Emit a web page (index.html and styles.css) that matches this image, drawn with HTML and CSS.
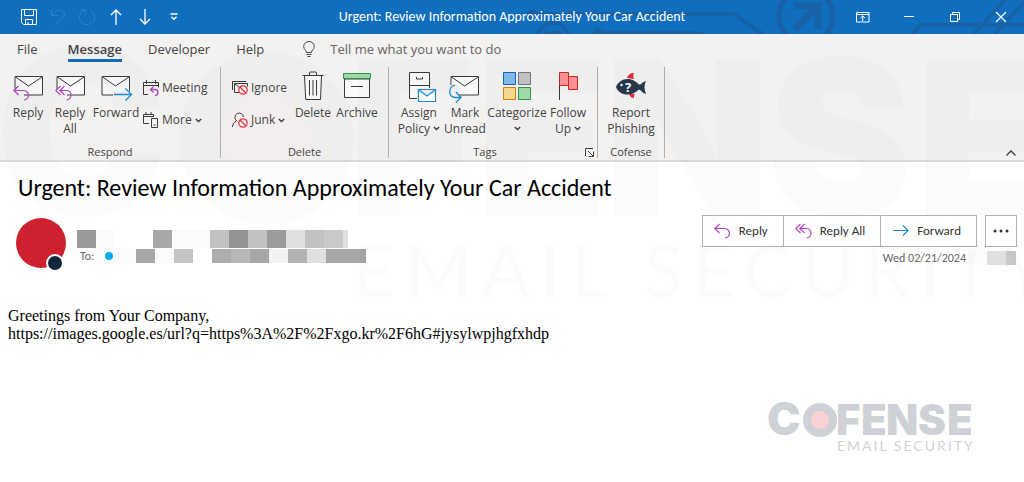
FILE: index.html
```html
<!DOCTYPE html>
<html lang="en">
<head>
<meta charset="utf-8">
<meta name="viewport" content="width=device-width, initial-scale=1">
<title>Urgent: Review Information Approximately Your Car Accident</title>
<link rel="stylesheet" href="styles.css">
</head>
<body>
<svg class="defs" aria-hidden="true">
  <symbol id="envelope" viewBox="0 0 32 32"><path d="M2 5.500h27.500v18.500H2z" fill="#fafafa" stroke="#3b3a39"/><path d="M2.500 6l13 9 13.500-9" fill="none" stroke="#3b3a39"/></symbol>
  <symbol id="reply" viewBox="0 0 16 16"><path d="M5.500 1L.8 5.500l4.700 4.500M1 5.500h9c3 0 5.500 2 5.500 4.600S13.500 14.800 11 15" fill="none" stroke="#b146c2" stroke-width="1.200"/></symbol>
  <symbol id="reply-all" viewBox="0 0 17 16"><path d="M5.500 1L.8 5.500l4.700 4.500M9.500 1L4.800 5.500 9.500 10M5 5.500h6c3 0 5 2 5 4.600s-2 4.700-4.500 4.900" fill="none" stroke="#b146c2" stroke-width="1.200"/></symbol>
  <symbol id="chevron" viewBox="0 0 7 5"><path d="M.8 1l2.700 2.500L6.200 1" fill="none" stroke="#3b3a39" stroke-width="1.300"/></symbol>
  <symbol id="block" viewBox="0 0 10 10"><circle cx="5" cy="5" r="4.200" fill="#fff" stroke="#e8353b" stroke-width="1.200"/><path d="M2 2l6 6" stroke="#e8353b" stroke-width="1.200"/></symbol>
</svg>

<div class="window">
  <header class="titlebar">
    <svg class="circuit" viewBox="0 0 524 34" aria-hidden="true" fill="none" stroke="#1762a6" stroke-width="4">
      <circle cx="306" cy="16" r="27" stroke-width="5"/>
      <path d="M294 6h24v23M317 6l-22 23" stroke-width="7"/>
      <circle cx="53" cy="39" r="16"/><path d="M44 33h16v6" stroke-width="4"/>
      <path d="M30 14h204l30 21M98 33h100l12 4"/><circle cx="32" cy="14" r="3"/><circle cx="98" cy="33" r="3"/>
      <path d="M412 36l8-11h110M474 34l31-34M494 34l30-31"/>
    </svg>
    <div class="quick">
      <button aria-label="Save"><svg width="16" height="16" viewBox="0 0 16 16"><path d="M.5.500h15v15h-13l-2-2zM3.500.500v6h9v-6M4.500 15.500v-5h7v5M7 13v2.500" fill="none" stroke="#fff"/></svg></button>
      <button aria-label="Undo" disabled><svg width="16" height="16" viewBox="0 0 16 16"><path d="M1.500.5v6h6M1.500 6.500L6 2.500c3-2.500 7-1.500 8 1 1 2 0 4-1 5l-7 7" fill="none" stroke="#3a8ed8"/></svg></button>
      <button aria-label="Redo" disabled><svg width="16" height="16" viewBox="0 0 16 16"><path d="M1.500.7h5v5M6.500 1C2 2.500.5 5 .5 8.500c0 4 3.200 7 7.500 7s7.500-3 7.500-7c0-3-1.500-5.500-4-6.800" fill="none" stroke="#3a8ed8"/></svg></button>
      <button aria-label="Previous item"><svg width="12" height="16" viewBox="0 0 12 16"><path d="M6 16V1M1 6l5-5 5 5" fill="none" stroke="#fff" stroke-width="1.300"/></svg></button>
      <button aria-label="Next item"><svg width="12" height="16" viewBox="0 0 12 16"><path d="M6 0v15M1 10l5 5 5-5" fill="none" stroke="#fff" stroke-width="1.300"/></svg></button>
      <button aria-label="Customize toolbar"><svg width="8" height="8" viewBox="0 0 8 8"><path d="M.5 1h7M1.500 3.700L4 6.200l2.500-2.500" fill="none" stroke="#fff" stroke-width="1.400"/></svg></button>
    </div>
    <div class="window-title">Urgent: Review Information Approximately Your Car Accident</div>
    <div class="controls">
      <button aria-label="Ribbon options"><svg width="14" height="11" viewBox="0 0 14 11"><path d="M.5.500h12.500v9.500H.5zM.5 2.500H13M6.700 9V4M4.500 6l2.200-2 2.300 2" fill="none" stroke="#fff"/></svg></button>
      <button aria-label="Minimize"><svg width="10" height="10" viewBox="0 0 10 10"><path d="M0 4.500h10" stroke="#fff"/></svg></button>
      <button aria-label="Restore"><svg width="10" height="10" viewBox="0 0 10 10"><path d="M.5 2.500h7v7h-7zM2.500 2V.500h7v7H8" fill="none" stroke="#fff"/></svg></button>
      <button aria-label="Close"><svg width="10" height="10" viewBox="0 0 10 10"><path d="M0 0l10 10M10 0L0 10" stroke="#fff" stroke-width="1.200"/></svg></button>
    </div>
  </header>

  <nav class="tabs">
    <button class="tab tab-file">File</button>
    <button class="tab tab-active">Message</button>
    <button class="tab">Developer</button>
    <button class="tab">Help</button>
    <button class="tab tell"><svg width="12" height="16" viewBox="0 0 12 16"><path d="M3.500 11.500C3.500 9 .7 8.500.7 5.500a5.300 5 0 0 1 10.600 0c0 3-2.800 3.500-2.800 6zM3.500 13.500h5M4.500 15.500h3" fill="none" stroke="#444"/></svg>Tell me what you want to do</button>
  </nav>

  <section class="ribbon">
    <div class="group respond">
      <div class="tools">
        <button class="big narrow"><svg width="34" height="34" viewBox="-2 0 34 34"><use href="#envelope" width="32" height="32"/><path d="M-1 18h12v8h7v6H-1z" fill="#f1f1ef"/><use href="#reply" x="0" y="14" width="16" height="16"/></svg><span>Reply</span></button>
        <button class="big narrow"><svg width="34" height="34" viewBox="-2 0 34 34"><use href="#envelope" width="32" height="32"/><path d="M-1 18h13v8h7v6H-1z" fill="#f1f1ef"/><use href="#reply-all" x="0" y="14" width="17" height="16"/></svg><span>Reply<br>All</span></button>
        <button class="big mid"><svg width="34" height="34" viewBox="-1 0 34 34"><use href="#envelope" width="32" height="32"/><path d="M13 20h20v8H13z" fill="#f1f1ef"/><path d="M14 23.500h17M25.500 17.500l6 6-6 6" fill="none" stroke="#1e8ad6" stroke-width="1.300"/></svg><span>Forward</span></button>
        <div class="stack">
          <button class="small"><svg width="16" height="16" viewBox="0 0 16 16"><path d="M5 14.500H.5v-12h15v5M.5 5.500h15M3.500 0v4M12.500 0v4" fill="none" stroke="#3b3a39"/><path d="M10.500 6.500L7.500 9.500l3 3M8 9.500h4c4 0 4 5.500 0 6" fill="none" stroke="#b146c2" stroke-width="1.300"/></svg>Meeting</button>
          <button class="small"><svg width="16" height="16" viewBox="0 0 16 16"><path d="M6 11.500H.5v-9h10V5M.5 4.500h10M3 0v3M8 0v3M8.500 6.500h6v9h-6zM10.500 13h2" fill="none" stroke="#3b3a39"/></svg>More<svg class="chev"><use href="#chevron"/></svg></button>
        </div>
      </div>
      <div class="caption">Respond</div>
    </div>

    <div class="group delete">
      <div class="tools">
        <div class="stack">
          <button class="small"><svg width="16" height="16" viewBox="0 0 16 16"><path d="M.5 10V1.500H14M7 12.500H2.500v-9h13v3M3 4l5 4" fill="none" stroke="#3b3a39"/><use href="#block" x="6" y="5" width="10" height="10"/></svg>Ignore</button>
          <button class="small"><svg width="16" height="16" viewBox="0 0 16 16"><path d="M.6 15c0-3 1.500-5 4-6.200M4.600 8.800A4.300 4.300 0 1 1 11.500 5" fill="none" stroke="#3b3a39"/><use href="#block" x="6" y="6" width="10" height="10"/></svg>Junk<svg class="chev"><use href="#chevron"/></svg></button>
        </div>
        <button class="big mid-s"><svg width="34" height="34" viewBox="0 0 34 34"><path d="M8.500 5l1.200 23.500h14.800L25.500 5" fill="#fafafa" stroke="#3b3a39"/><path d="M6.500 4.500h21M13.500 4V2q0-1 1-1h5q1 0 1 1v2M13.500 9v15.500M17 9v15.500M20.500 9v15.500" fill="none" stroke="#3b3a39"/></svg><span>Delete</span></button>
        <button class="big mid-s"><svg width="34" height="34" viewBox="0 0 34 34"><path d="M4.500 8h25v18.500h-25z" fill="#fafafa" stroke="#3b3a39"/><path d="M3.500 2.500h27v5h-27z" fill="#9fdba9" stroke="#2f9344"/><path d="M11 15.500h12" stroke="#3b3a39"/></svg><span>Archive</span></button>
      </div>
      <div class="caption">Delete</div>
    </div>

    <div class="group tags">
      <div class="tools">
        <button class="big"><svg width="34" height="34" viewBox="-1 0 34 34"><path d="M6.500 1.500h20v26h-20z" fill="#fafafa" stroke="#3b3a39"/><path d="M6.500 14.500h20M13.500 6v2h6V6" fill="none" stroke="#3b3a39"/><path d="M14 17h19v14H14z" fill="#f1f1ef"/><path d="M15.500 18.500h17v12h-17zM16 19l8 6 8-6" fill="#fafafa" stroke="#1e8ad6" stroke-width="1.200"/></svg><span>Assign<br>Policy<svg class="chev"><use href="#chevron"/></svg></span></button>
        <button class="big"><svg width="34" height="34" viewBox="0 0 34 34"><use href="#envelope" x="1" width="32" height="32"/><path d="M0 14h10v11h6v7H0z" fill="#f1f1ef"/><path d="M7 14C0 16 0 26 7 26.500h5.500M8 21l5 5.500-5 5" fill="none" stroke="#1e8ad6" stroke-width="1.300"/></svg><span>Mark<br>Unread</span></button>
        <button class="big wide"><svg width="34" height="34" viewBox="0 0 34 34"><path d="M3.500 1.500h12v12h-12z" fill="#83bbec" stroke="#0f64b5"/><path d="M18.500 1.500h12v12h-12z" fill="#c4c4c4" stroke="#777"/><path d="M3.500 16.500h12v12h-12z" fill="#f8dc8f" stroke="#dc7c0c"/><path d="M18.500 16.500h12v12h-12z" fill="#a1dcab" stroke="#32954a"/></svg><span>Categorize<br><svg class="chev alone"><use href="#chevron"/></svg></span></button>
        <button class="big mid-s"><svg width="34" height="34" viewBox="-1 0 34 34"><path d="M7.500 14v15" stroke="#3b3a39"/><path d="M16.500 5.500h9v13h-9z" fill="#ff9297" stroke="#d6261f"/><path d="M7.500 1.500h9v13h-9z" fill="#ff9297" stroke="#d6261f"/></svg><span>Follow<br>Up<svg class="chev"><use href="#chevron"/></svg></span></button>
      </div>
      <div class="caption">Tags<button class="launcher" aria-label="Tags options"><svg width="9" height="9" viewBox="0 0 9 9"><path d="M.5 8V.500H8M3 3l5 5M8.500 3.500v5h-5" fill="none" stroke="#3b3a39"/></svg></button></div>
    </div>

    <div class="group cofense">
      <div class="tools">
        <button class="big wide"><svg width="34" height="34" viewBox="0 0 34 34"><path d="M13 7c1-3 3-5 7-5-1 2-1 4 0 6zM15 23c1 3 3 4 5 4 0-2 0-3 1-4z" fill="#ea2a35"/><path d="M2 16C5 8 16 4 25 13.500 27 14 28 11 32 10c-2 4-2 8 0 13-4-1-5-4-7-4.500C16 27 5 24 2 16z" fill="#27394c"/><circle cx="7.500" cy="14" r="1.200" fill="#fff"/><text x="11" y="20.500" class="fish-mark">?</text></svg><span>Report<br>Phishing</span></button>
      </div>
      <div class="caption">Cofense</div>
    </div>
    <button class="collapse" aria-label="Collapse ribbon"><svg width="10" height="6" viewBox="0 0 10 6"><path d="M.5 5.500L5 1l4.500 4.500" fill="none" stroke="#3b3a39" stroke-width="1.300"/></svg></button>
  </section>

  <main class="message">
    <h1>Urgent: Review Information Approximately Your Car Accident</h1>
    <div class="meta">
      <div class="avatar"><span class="presence"></span></div>
      <div class="people">
        <div class="mosaic tall"><i class="g60"></i><i class="g98"></i><i></i><i></i><i class="g66"></i><i class="g98"></i><i class="g98"></i><i class="g76"></i><i class="g58"></i><i class="g76"></i><i class="g61"></i><i class="g87"></i><i class="g76"></i><i class="g79"></i><i class="g87 sliver"></i></div>
        <div class="to"><span>To:</span><span class="dot"></span>
          <div class="mosaic"><i class="g98"></i><i class="g66"></i><i class="g98"></i><i class="g77"></i><i></i><i class="g67"></i><i class="g72"></i><i class="g65"></i><i class="g95"></i><i class="g70"></i><i class="g87"></i><i class="g65"></i><i class="g65 last"></i></div>
        </div>
      </div>
      <div class="side">
        <div class="actions">
          <button><svg width="17" height="16"><use href="#reply" width="16" height="16"/></svg>Reply</button>
          <button><svg width="17" height="16"><use href="#reply-all" width="17" height="16"/></svg>Reply All</button>
          <button><svg width="17" height="16" viewBox="0 0 17 16"><path d="M1 7.500h15M11 2.500l5 5-5 5" fill="none" stroke="#1e8ad6" stroke-width="1.200"/></svg>Forward</button>
          <button class="dots" aria-label="More actions"><svg width="16" height="4" viewBox="0 0 16 4" fill="#333"><circle cx="2" cy="2" r="1.500"/><circle cx="8" cy="2" r="1.500"/><circle cx="14" cy="2" r="1.500"/></svg></button>
        </div>
        <div class="date"><time datetime="2024-02-21">Wed 02/21/2024</time><div class="mosaic"><i class="g98"></i><i class="g87"></i><i class="g79 half"></i></div></div>
      </div>
    </div>
    <div class="body">
      <p>Greetings from Your Company,</p>
      <p>https://images.google.es/url?q=https%3A%2F%2Fxgo.kr%2F6hG#jysylwpjhgfxhdp</p>
    </div>
    <footer class="brand">
      <svg width="204" height="48" viewBox="0 0 204 48" role="img" aria-label="Cofense Email Security">
        <g id="logo"><text class="word" x="-1 35 68 93 118 150 179" y="31"><tspan class="word-initial">C</tspan>OFENSE</text><circle cx="52" cy="16" r="13" fill="none" stroke="#10263a" stroke-width="8"/><circle cx="52" cy="16" r="9" fill="#ea202f"/><text class="strap" x="69" y="47">EMAIL SECURITY</text></g>
      </svg>
    </footer>
  </main>
  <svg class="ghost" viewBox="0 0 204 48" aria-hidden="true"><use href="#logo"/></svg>
</div>
</body>
</html>
```
FILE: styles.css
```css
* { box-sizing: border-box; }
body { margin: 0; background: #fff; font-family: "Open Sans", "Noto Sans", sans-serif; font-size: 12px; line-height: 16px; color: #444; }
button { margin: 0; padding: 0; border: 0; background: none; font: inherit; color: inherit; }
svg { display: block; flex: none; overflow: visible; }
.defs { position: absolute; width: 0; height: 0; }
.window { position: relative; display: flex; flex-direction: column; min-height: 100vh; overflow: hidden; }

.titlebar { position: relative; display: grid; grid-template-columns: 1fr auto 1fr; align-items: center; height: 34px; overflow: hidden; background: #106ebe; color: #fff; }
.circuit { position: absolute; top: 0; right: 0; width: 524px; height: 34px; }
.quick, .window-title, .controls { position: relative; }
.quick { display: flex; align-items: center; padding-left: 14px; }
.quick button { display: flex; justify-content: center; width: 29px; }
.quick button:disabled { opacity: .7; }
.window-title { font-family: Carlito, Lato, sans-serif; font-size: 14px; }
.controls { display: flex; justify-content: flex-end; align-items: center; }
.controls button { display: flex; justify-content: center; width: 46px; }

.tabs { display: flex; gap: 26px; padding: 6px 17px 0; height: 33px; background: #f3f2f1; font-size: 13px; }
.tab { display: flex; align-items: center; height: 18px; }
.tab-file { margin-right: 4px; }
.tab-active { height: 22px; padding-bottom: 4px; font-weight: 600; box-shadow: inset 0 -3px #106ebe; }
.tell { gap: 15px; margin-left: 13px; color: #666; }

.ribbon { display: flex; height: 95px; padding-bottom: 2px; background: #f3f2f1; border-bottom: 2px solid #d8d8d8; }
.group { display: flex; flex-direction: column; justify-content: space-between; border-right: 1px solid #b3b0ad; padding-top: 4px; }
.tools { display: flex; padding: 0 7px; }
.big { display: flex; flex-direction: column; align-items: center; width: 46px; white-space: nowrap; }
.big span { line-height: 16px; }
.narrow { width: 42px; }
.mid { width: 50px; }
.mid-s { width: 44px; }
.wide { width: 58px; }
.stack { display: flex; flex-direction: column; padding: 1px 0 0 2px; }
.small { display: flex; align-items: center; gap: 3px; height: 32px; }
.chev { display: inline-block; width: 7px; height: 5px; margin-left: 3px; vertical-align: 2px; }
.small .chev, .chev.alone { margin-left: 0; }
.respond { width: 221px; }
.delete { width: 168px; }
.delete .stack { width: 60px; padding-left: 4px; margin-right: 3px; }
.tags { width: 209px; }
.cofense { width: 67px; }
.cofense .tools { padding: 0 4px; }
.caption { position: relative; height: 13px; font-size: 11px; line-height: 14px; text-align: center; }
.tags .caption { padding-right: 16px; }
.launcher { position: absolute; right: 3px; bottom: 1px; }
.collapse { align-self: flex-end; margin: 0 8px 2px auto; }
.fish-mark { font: 700 13px "Noto Sans", sans-serif; fill: #fff; }

.message { flex: 1; display: flex; flex-direction: column; }
h1 { margin: 0; padding: 12px 18px 13px; font: 400 24px/28px Carlito, Lato, sans-serif; color: #000; }
.meta { display: flex; padding: 0 7px 0 16px; }
.avatar { position: relative; width: 50px; height: 50px; margin-top: 3px; border-radius: 50%; background: #ce202f; }
.presence { position: absolute; right: 2px; bottom: -4px; width: 18px; height: 18px; border: 2px solid #fff; border-radius: 50%; background: #10263a; }
.people { padding: 15px 0 0 11px; }
.mosaic { display: flex; height: 14px; }
.mosaic.tall { height: 18px; margin-bottom: 1px; }
.mosaic i { width: 19px; }
.mosaic .last { width: 21px; }
.mosaic .sliver { width: 5px; }
.mosaic .half { width: 10px; }
.g58 { background: #939393; } .g60 { background: #999; } .g61 { background: #9b9b9b; } .g65 { background: #a6a6a6; }
.g66 { background: #a8a8a8; } .g67 { background: #adadad; } .g70 { background: #b2b2b2; } .g72 { background: #b8b8b8; }
.g76 { background: #c2c2c2; } .g77 { background: #c5c5c5; } .g79 { background: #c9c9c9; } .g87 { background: #dfdfdf; }
.g95 { background: #f2f2f2; } .g98 { background: #fbfbfb; }
.to { display: flex; align-items: center; padding-left: 3px; font: 12px/14px Carlito, Lato, sans-serif; color: #666; }
.dot { width: 8px; height: 8px; margin: 0 4px 0 11px; border-radius: 50%; background: #00aeef; }
.side { margin-left: auto; }
.actions { display: flex; justify-content: flex-end; font: 13px/16px Carlito, Lato, sans-serif; color: #333; }
.actions button { display: flex; align-items: center; gap: 8px; height: 32px; padding: 0 15px 0 11px; border: 1px solid #b3b0ad; background: #fff; }
.actions button + button { margin-left: -1px; }
.actions button.dots { width: 32px; padding: 0; margin-left: 8px; justify-content: center; }
.date { display: flex; justify-content: flex-end; align-items: center; gap: 2px; margin-top: 4px; padding-right: 1px; font: 12px/14px Carlito, Lato, sans-serif; color: #666; }
.body { padding: 39px 8px 0; font: 16px/18px "Liberation Serif", serif; color: #000; }
.body p { margin: 0; overflow-wrap: anywhere; }
.brand { display: flex; justify-content: flex-end; margin-top: auto; padding: 0 52px 30px 0; }
.brand svg { opacity: .2; }
.word { font: 900 42px Inter, sans-serif; fill: #10263a; }
.word-initial { font-size: 45px; }
.strap { font: 400 14px Lato, sans-serif; letter-spacing: 2px; fill: #10263a; }
.ghost { position: absolute; top: 56px; left: 0; width: 102%; opacity: .012; pointer-events: none; }
```
